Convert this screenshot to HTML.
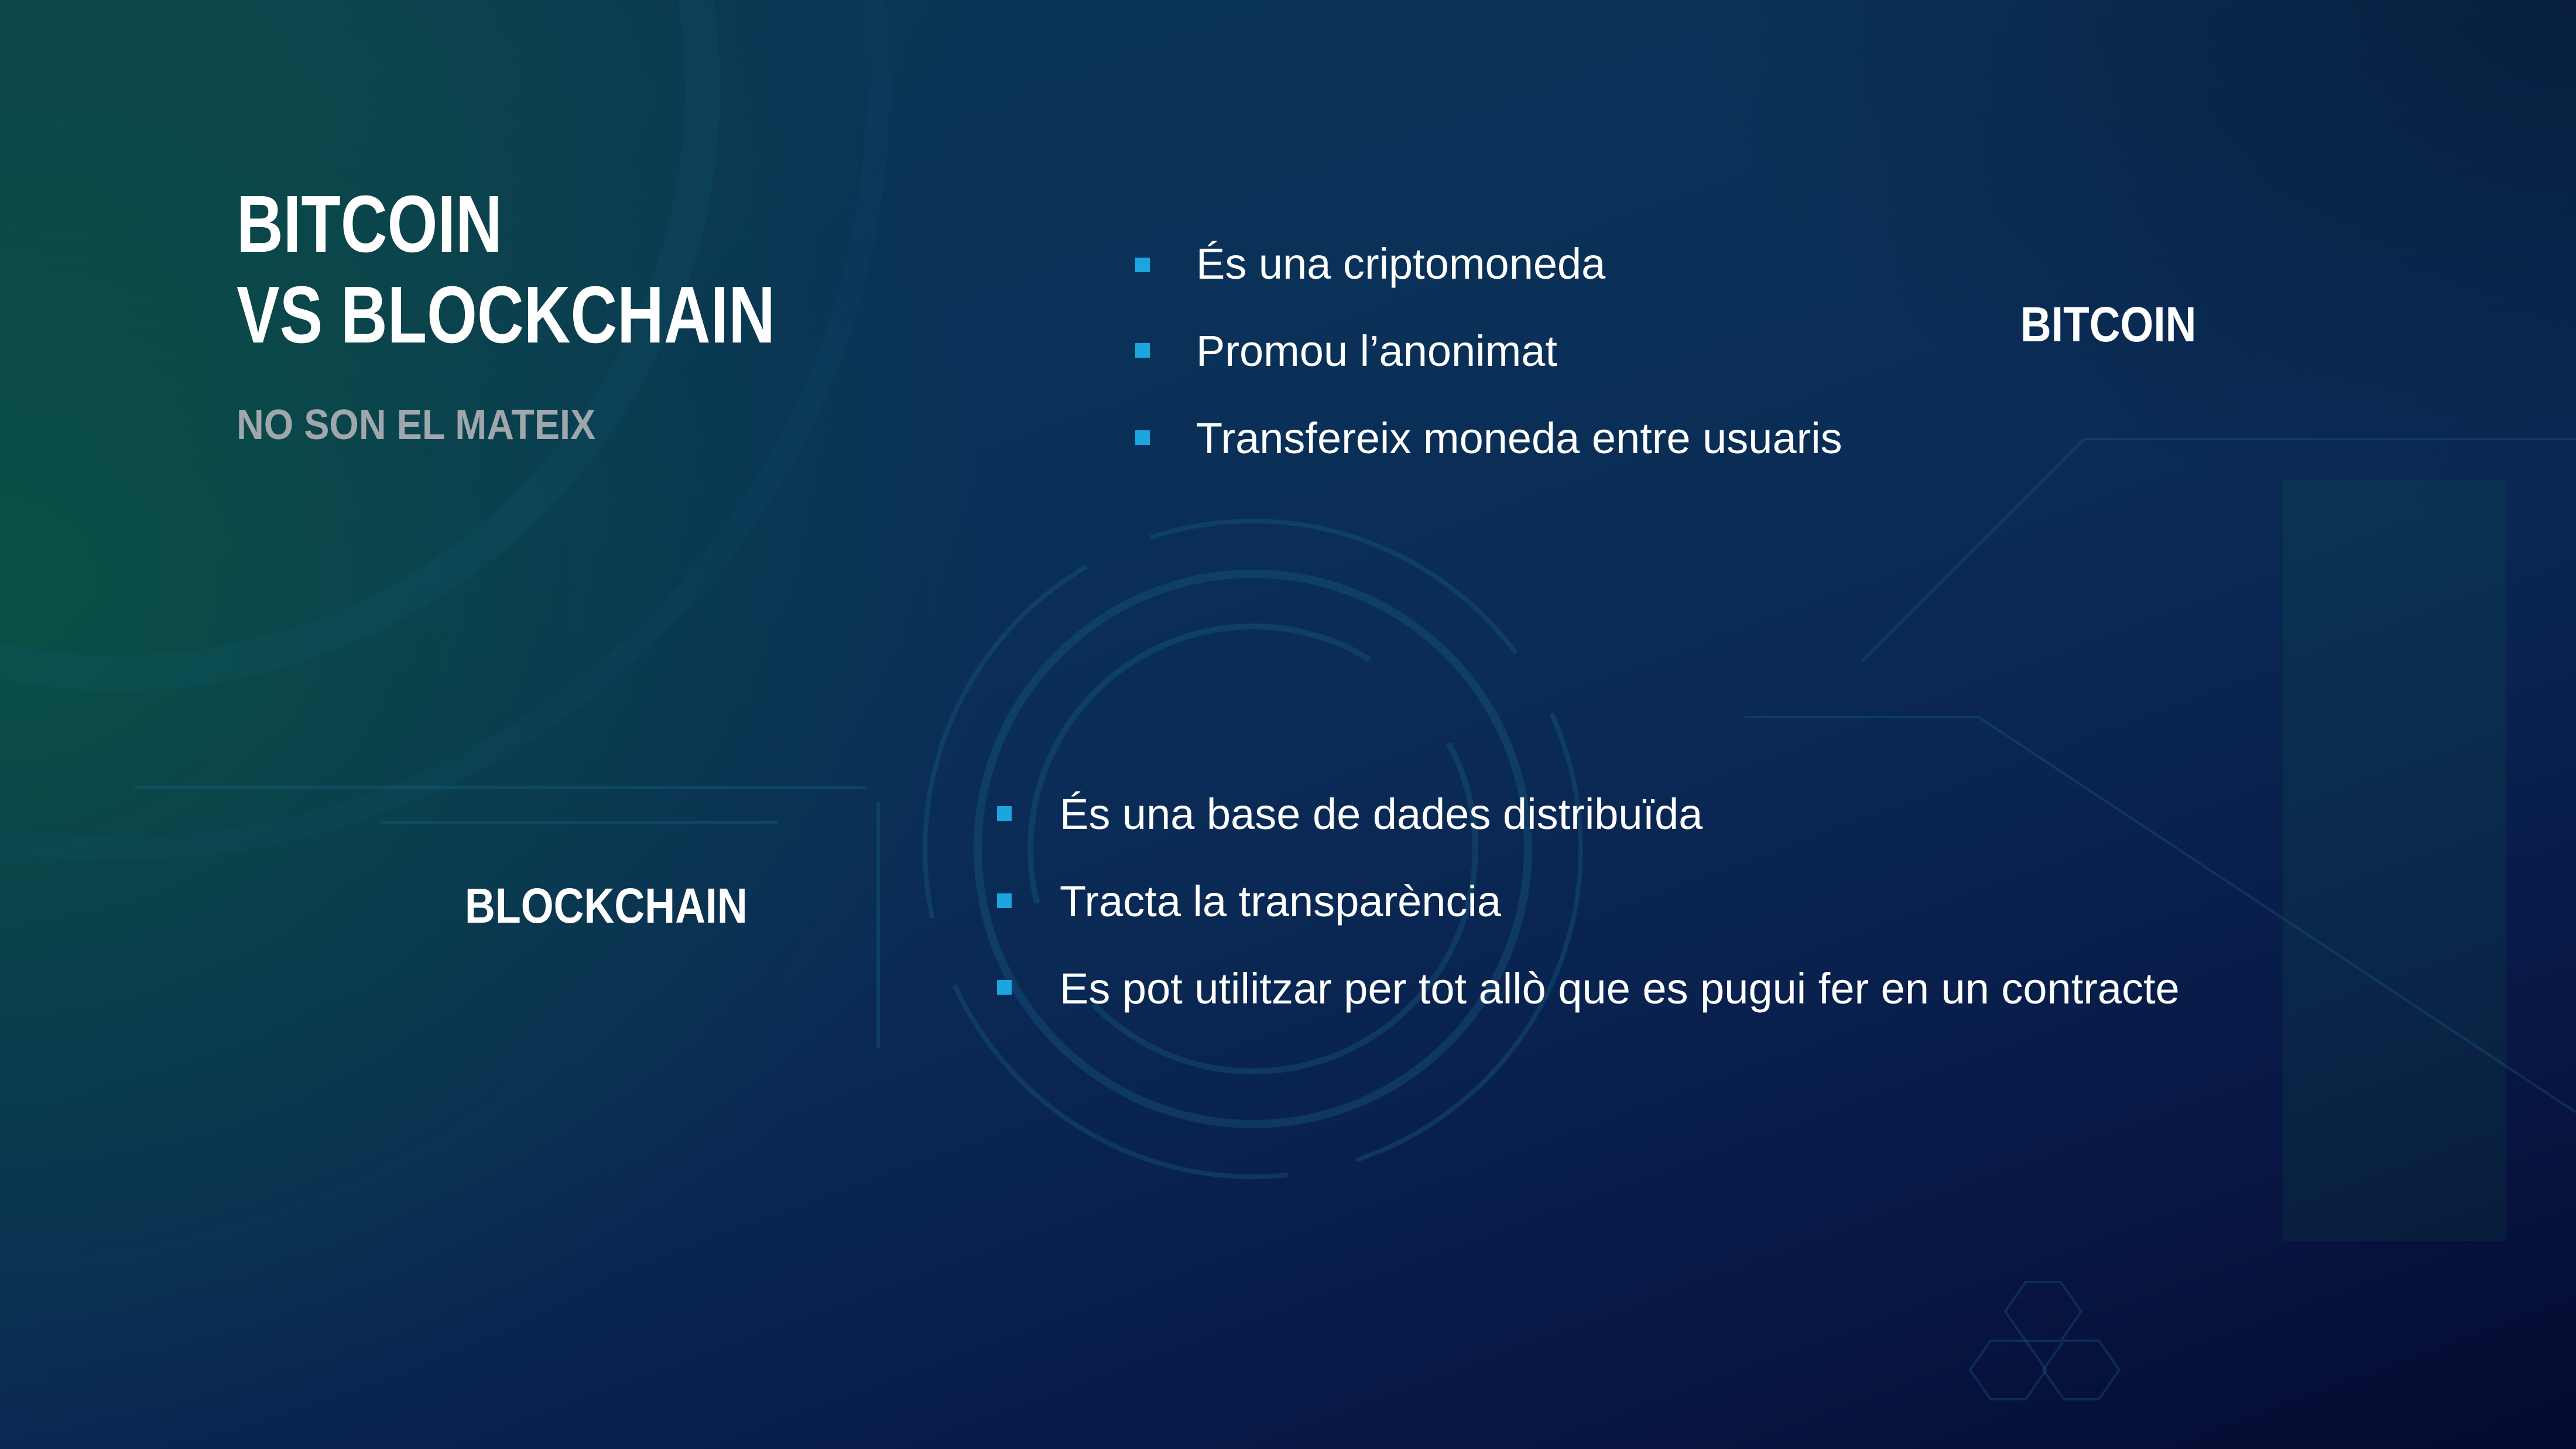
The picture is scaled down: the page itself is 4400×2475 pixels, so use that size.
<!DOCTYPE html>
<html><head><meta charset="utf-8"><style>
html,body{margin:0;padding:0}
body{width:4400px;height:2475px;position:relative;overflow:hidden;
background:
radial-gradient(ellipse 1700px 1500px at 0px 1000px, rgba(10,100,55,0.6), rgba(10,90,70,0) 100%),
radial-gradient(ellipse 1400px 800px at 300px 0px, rgba(15,80,75,0.45), rgba(0,0,0,0) 100%),
radial-gradient(ellipse 1500px 900px at 4400px 0px, rgba(5,15,40,0.5), rgba(0,0,0,0) 100%),
linear-gradient(160deg,#0b3652 0%,#0a3258 30%,#0a2a55 55%,#081a48 78%,#050a30 100%);
font-family:"Liberation Sans",sans-serif;color:#fff}
.t{position:absolute;line-height:1;white-space:nowrap;transform-origin:0 0}
.n{font-weight:bold}
.b{font-size:74px}
.sq{position:absolute;width:25px;height:25px;background:#1ba6e0}
svg{position:absolute;left:0;top:0}
</style></head><body>
<svg width="4400" height="2475">
<g fill="none" stroke="#1a6a90" stroke-opacity="0.3">
<circle cx="2140" cy="1450" r="470" stroke-width="14"/>
<circle cx="2140" cy="1450" r="560" stroke-width="8" stroke-dasharray="700 120"/>
<circle cx="2140" cy="1450" r="380" stroke-width="10" stroke-dasharray="900 200"/>
<circle cx="200" cy="150" r="1000" stroke-width="60" stroke-opacity="0.1"/>
<circle cx="200" cy="150" r="1300" stroke-width="40" stroke-opacity="0.08"/>
<polyline points="3180,1130 3560,750 4400,750" stroke-width="4"/>
<polyline points="2980,1225 3380,1225 4400,1900" stroke-width="4"/>
<line x1="230" y1="1345" x2="1480" y2="1345" stroke-width="6"/>
<line x1="650" y1="1405" x2="1330" y2="1405" stroke-width="6"/>
<line x1="1500" y1="1370" x2="1500" y2="1790" stroke-width="6"/>
<polygon points="3460,2190 3520,2190 3555,2240 3520,2290 3460,2290 3425,2240" stroke-width="4"/>
<polygon points="3400,2290 3460,2290 3495,2340 3460,2390 3400,2390 3365,2340" stroke-width="4"/>
<polygon points="3525,2290 3585,2290 3620,2340 3585,2390 3525,2390 3490,2340" stroke-width="4"/>
</g>
<g fill="#1a7a50" fill-opacity="0.12">
<rect x="3900" y="820" width="380" height="1300"/>
</g>
</svg>
<div class="t n" style="left:404px;top:314px;font-size:138px;transform:scaleX(0.8)">BITCOIN</div>
<div class="t n" style="left:404px;top:469px;font-size:138px;transform:scaleX(0.8)">VS BLOCKCHAIN</div>
<div class="t n" style="left:404px;top:690px;font-size:72px;color:#9fa7ad;transform:scaleX(0.9)">NO SON EL MATEIX</div>

<div class="sq" style="left:1939px;top:440px"></div>
<div class="sq" style="left:1939px;top:586px"></div>
<div class="sq" style="left:1939px;top:735px"></div>
<div class="t b" style="left:2043px;top:414px">És una criptomoneda</div>
<div class="t b" style="left:2043px;top:563px">Promou l’anonimat</div>
<div class="t b" style="left:2043px;top:712px">Transfereix moneda entre usuaris</div>

<div class="t n" style="left:3451px;top:512px;font-size:84px;transform:scaleX(0.87)">BITCOIN</div>
<div class="t n" style="left:794px;top:1505px;font-size:84px;transform:scaleX(0.855)">BLOCKCHAIN</div>

<div class="sq" style="left:1703px;top:1377px"></div>
<div class="sq" style="left:1703px;top:1526px"></div>
<div class="sq" style="left:1703px;top:1674px"></div>
<div class="t b" style="left:1810px;top:1354px">És una base de dades distribuïda</div>
<div class="t b" style="left:1810px;top:1503px">Tracta la transparència</div>
<div class="t b" style="left:1810px;top:1652px">Es pot utilitzar per tot allò que es pugui fer en un contracte</div>
</body></html>
